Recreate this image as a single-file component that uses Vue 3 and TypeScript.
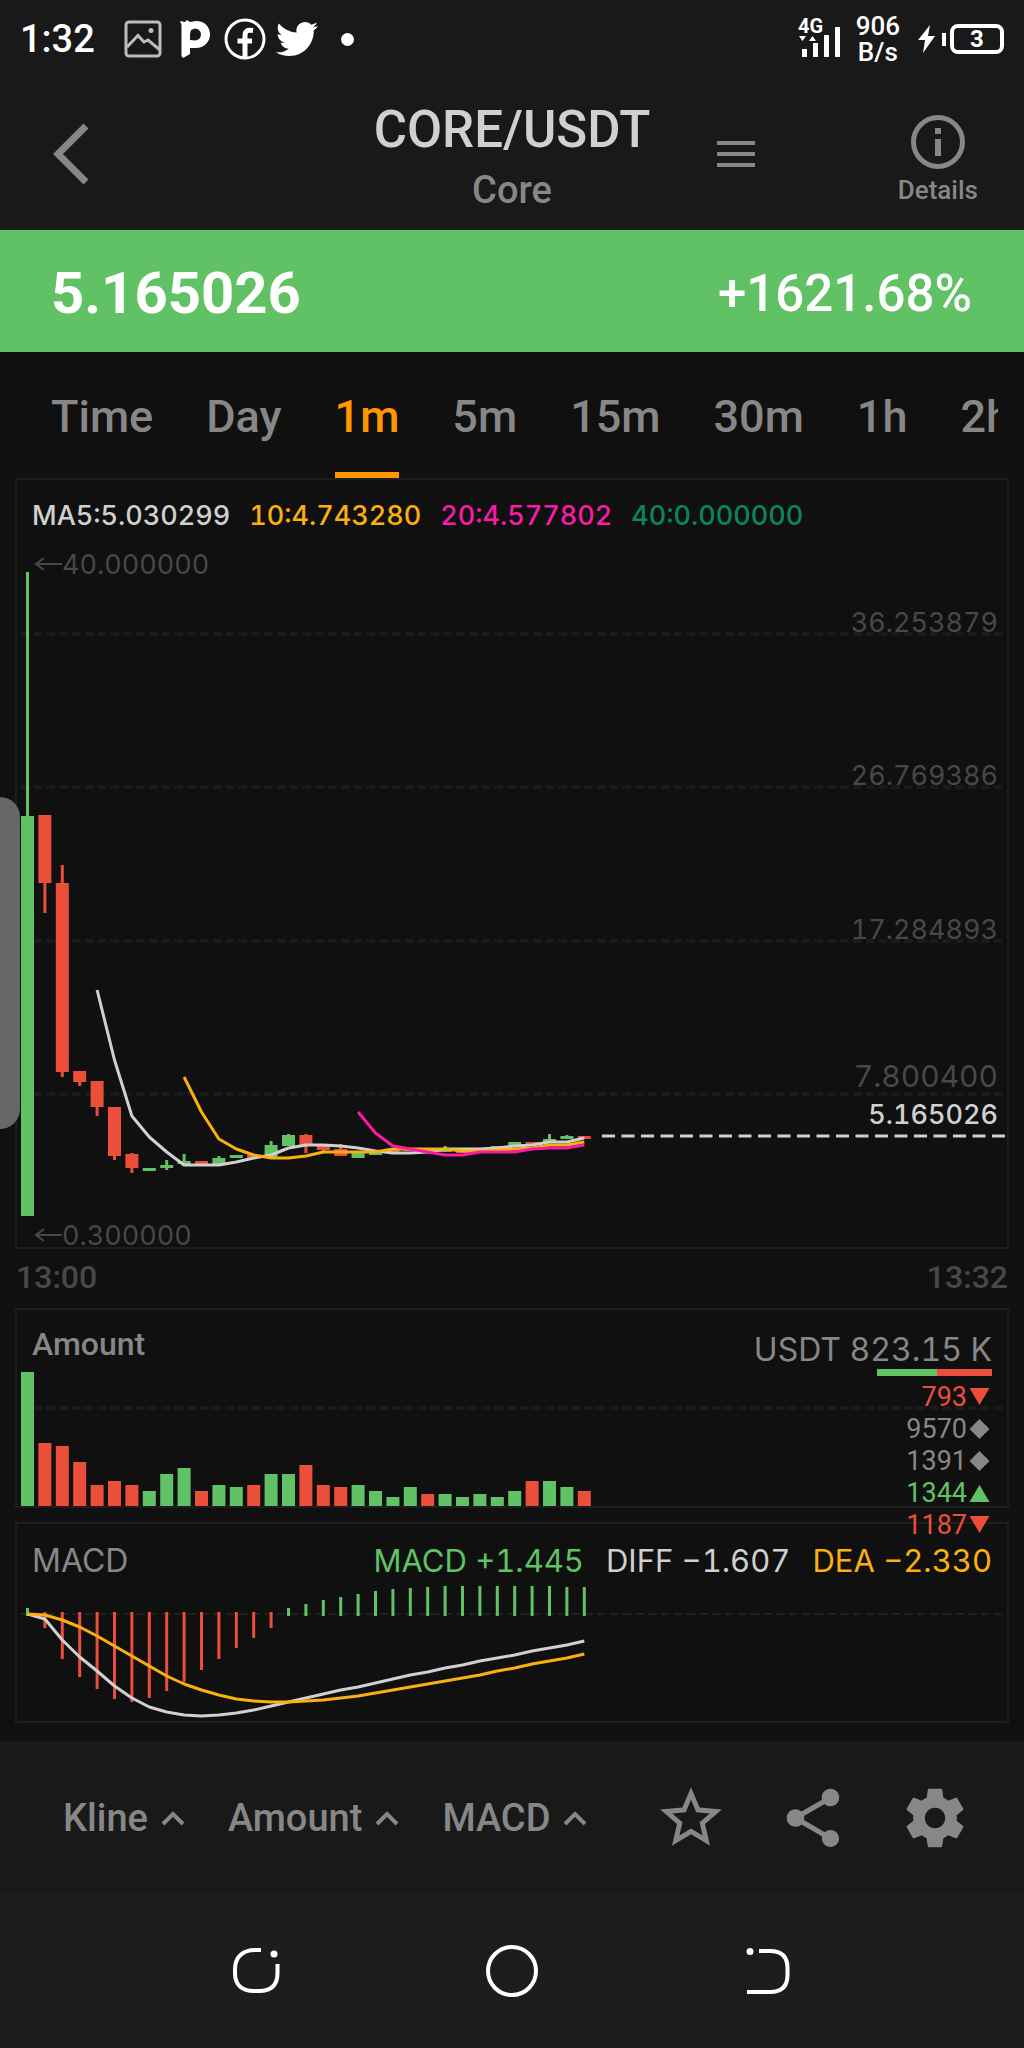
<script setup lang="ts">
import { ref } from 'vue'

type Side = 'up' | 'down'

interface Candle {
  side: Side
  top: number
  bottom: number
  high: number
  low: number
}

const STEP = 17.4
const FIRST = 10.5
const BODY = 13

const cx = (i: number): number => FIRST + i * STEP

const tabs = ['Time', 'Day', '1m', '5m', '15m', '30m', '1h', '2h']
const activeTab = ref('1m')

const averages = [
  { label: 'MA5:5.030299', tone: 'light' },
  { label: '10:4.743280', tone: 'yellow' },
  { label: '20:4.577802', tone: 'pink' },
  { label: '40:0.000000', tone: 'teal' },
]

const candle = (side: Side, top: number, bottom: number, high = top, low = bottom): Candle => ({
  side,
  top,
  bottom,
  high,
  low,
})

const candles: Candle[] = [
  candle('up', 336, 736, 92),
  candle('down', 335, 403, 335, 433),
  candle('down', 403, 592, 385, 597),
  candle('down', 591, 602, 591, 606),
  candle('down', 601, 627, 601, 636),
  candle('down', 627, 676, 627, 680),
  candle('down', 674, 688, 673, 693),
  candle('up', 688, 691),
  candle('up', 685, 688, 680, 690),
  candle('up', 681, 684, 674, 685),
  candle('down', 681, 684),
  candle('up', 678, 684, 676, 686),
  candle('up', 675, 678),
  candle('down', 675, 678),
  candle('up', 665, 677, 661),
  candle('up', 655, 666, 654),
  candle('down', 655, 665, 654, 673),
  candle('down', 666, 670, 664, 673),
  candle('down', 669, 676, 664),
  candle('up', 673, 678),
  candle('up', 672, 675),
  candle('down', 669, 672),
  candle('down', 668, 671),
  candle('down', 669, 672),
  candle('up', 670, 672, 666),
  candle('down', 669, 673),
  candle('down', 669, 673),
  candle('up', 666, 669),
  candle('up', 662, 665),
  candle('down', 662, 665),
  candle('up', 659, 662, 654),
  candle('up', 656, 659, 655),
  candle('down', 656, 659),
]

const ma5 = [
  510, 580, 636, 657, 672, 685, 685, 685, 682, 678, 675, 668, 665, 665, 666, 668, 671, 673, 673,
  672, 669, 669, 669, 668, 666, 665, 662, 662, 658,
]
const ma10 = [
  597, 632, 659, 669, 675, 678, 678, 676, 672, 672, 672, 672, 669, 669, 669, 669, 671, 671, 670,
  669, 668, 665, 665, 662,
]
const ma20 = [632, 653, 666, 669, 672, 675, 675, 672, 672, 672, 669, 668, 668, 665]

const grid = [
  { y: 154, label: '36.253879', baseline: 152, large: false },
  { y: 307, label: '26.769386', baseline: 305, large: false },
  { y: 461, label: '17.284893', baseline: 459, large: false },
  { y: 614, label: '7.800400', baseline: 607, large: true },
]

const extremes = [
  { label: '40.000000', baseline: 94 },
  { label: '0.300000', baseline: 765 },
]

const volumes = [
  134, 63, 60, 44, 21, 25, 21, 15, 32, 38, 15, 21, 19, 21, 32, 32, 41, 21, 19, 21, 15, 9, 19, 12,
  12, 9, 12, 9, 15, 25, 25, 19, 15,
]
const volumeDown = new Set([1, 2, 3, 4, 5, 6, 10, 13, 16, 17, 18, 23, 29, 32])

const ZERO = 90
const histogram = [
  6, -14, -45, -63, -75, -85, -88, -84, -77, -68, -56, -45, -34, -24, -14, 6, 10, 14, 17, 20, 23,
  25, 26, 27, 28, 28, 28, 28, 28, 28, 28, 27, 27,
]
const diff = [
  0, 5, 26, 43, 57, 72, 84, 93, 98, 101, 102, 101, 99, 96, 92, 88, 84, 80, 76, 73, 69, 65, 61, 58,
  54, 51, 47, 44, 41, 37, 34, 31, 27,
]
const dea = [
  0, 1, 6, 13, 22, 32, 42, 52, 62, 70, 76, 81, 85, 87, 88, 88, 87, 86, 84, 82, 79, 76, 73, 70, 67,
  64, 61, 57, 54, 50, 47, 44, 40,
]

const line = (ys: number[], start = 0, base = 0): string =>
  ys.map((y, i) => `${cx(start + i).toFixed(1)},${base + y}`).join(' ')

const trades = [
  { amount: '793', kind: 'down' },
  { amount: '9570', kind: 'flat' },
  { amount: '1391', kind: 'flat' },
  { amount: '1344', kind: 'up' },
  { amount: '1187', kind: 'down' },
]

const shapes: Record<string, string> = {
  down: '0,1 20,1 10,18',
  flat: '10,0 20,10 10,20 0,10',
  up: '10,2 20,19 0,19',
}

const pickers = ['Kline', 'Amount', 'MACD']
</script>

<template>
  <div class="screen">
    <div class="status">
      <div class="status-left">
        <span class="clock">1:32</span>
        <svg width="38" height="38" viewBox="0 0 38 38" fill="none" stroke="#bdbdbd" stroke-width="3">
          <rect x="2" y="2" width="34" height="34" rx="3" />
          <path d="M3 27 L14 15.500 L20 22 L24 20 L36 30" />
          <circle cx="27" cy="10.500" r="2.500" fill="#bdbdbd" stroke="none" />
        </svg>
        <svg class="ico-p" width="30" height="38" viewBox="0 0 30 38">
          <path fill="#fff" fill-rule="evenodd" d="M0 1 L5 2 L7 0 L10 2 L16 1 C25 1 30 7 30 14.500 C30 22 24 28 16 28 L10 28 L10 34 L3 38 L1.500 36 L1.500 5 Z M15 8.500 L11 10 L10 14 L10 20 L15 20.500 A6 6 0 0 0 21 14.500 A6 6 0 0 0 15 8.500 Z" />
        </svg>
        <svg class="ico-f" width="42" height="42" viewBox="0 0 42 42" fill="none" stroke="#fff">
          <circle cx="21" cy="21" r="19" stroke-width="3" />
          <path d="M21 40 V18 C21 13 23 11.500 29 12.500 M13.500 23 H28" stroke-width="5" />
        </svg>
        <svg class="ico-bird" width="42" height="42" viewBox="0 0 24 24" fill="#fff">
          <path d="M23.954 4.569c-.885.389-1.83.654-2.825.775 1.014-.611 1.794-1.574 2.163-2.723-.951.555-2.005.959-3.127 1.184-.896-.959-2.173-1.559-3.591-1.559-2.717 0-4.92 2.203-4.92 4.917 0 .39.045.765.127 1.124C7.691 8.094 4.066 6.13 1.64 3.161c-.427.722-.666 1.561-.666 2.475 0 1.71.87 3.213 2.188 4.096-.807-.026-1.566-.248-2.228-.616v.061c0 2.385 1.693 4.374 3.946 4.827-.413.111-.849.171-1.296.171-.314 0-.615-.03-.916-.086.631 1.953 2.445 3.377 4.604 3.417-1.68 1.319-3.809 2.105-6.102 2.105-.39 0-.779-.023-1.17-.067 2.189 1.394 4.768 2.209 7.557 2.209 9.054 0 13.999-7.496 13.999-13.986 0-.209 0-.42-.015-.63.961-.689 1.8-1.56 2.46-2.548l-.047-.02z" />
        </svg>
        <span class="dot"></span>
      </div>
      <div class="status-right">
        <svg width="44" height="46" viewBox="0 -3 44 46" fill="#fff">
          <text x="0" y="14" class="net">4G</text>
          <path d="M1 17 H8 L4.500 22 Z M11 22 H18 L14.500 17 Z" />
          <path d="M4 30 h5 v8 h-5 z M15 24 h5 v14 h-5 z M26 16 h5 v22 h-5 z M37 8 h5 v30 h-5 z" />
        </svg>
        <div class="rate"><span>906</span><span>B/s</span></div>
        <svg width="18" height="28" viewBox="0 0 18 28" fill="#fff"><path d="M12 0 L0 15 H7 L5 28 L17 11 H10 Z" /></svg>
        <span class="battery-tip"></span>
        <span class="battery">3</span>
      </div>
    </div>

    <header class="header">
      <button class="plain back" type="button" aria-label="Back">
        <svg width="38" height="62" viewBox="0 0 38 62" fill="none" stroke="#878787" stroke-width="7"><path d="M34 3 L6 31 L34 59" /></svg>
      </button>
      <div class="title">
        <h1>CORE/USDT</h1>
        <p>Core</p>
      </div>
      <div class="header-actions">
        <button class="plain" type="button" aria-label="Menu">
          <svg width="38" height="26" viewBox="0 0 38 26" fill="#878787"><path d="M0 0h38v4H0z M0 11h38v4H0z M0 22h38v4H0z" /></svg>
        </button>
        <button class="plain details" type="button">
          <svg width="54" height="54" viewBox="0 0 54 54" fill="none" stroke="#878787">
            <circle cx="27" cy="27" r="24.500" stroke-width="5" />
            <path d="M27 13 v6 M27 24 v17" stroke-width="6" />
          </svg>
          <span>Details</span>
        </button>
      </div>
    </header>

    <div class="quote">
      <strong>5.165026</strong>
      <span>+1621.68%</span>
    </div>

    <nav class="tabs">
      <button
        v-for="tab in tabs"
        :key="tab"
        type="button"
        class="plain tab"
        :class="{ active: tab === activeTab }"
        @click="activeTab = tab"
      >{{ tab }}</button>
    </nav>

    <main class="charts">
      <section class="panel">
        <div class="legend">
          <span v-for="item in averages" :key="item.label" :class="item.tone">{{ item.label }}</span>
        </div>
        <svg class="plot" viewBox="0 0 990 767">
          <line v-for="g in grid" :key="g.y" class="grid-line" x1="4" x2="986" :y1="g.y" :y2="g.y" />
          <g v-for="(c, i) in candles" :key="i" :class="c.side">
            <rect :x="cx(i) - 1.5" :y="c.high" width="3" :height="c.low - c.high" />
            <rect :x="cx(i) - BODY / 2" :y="c.top" :width="BODY" :height="c.bottom - c.top" />
          </g>
          <polyline class="trace light" :points="line(ma5, 4)" />
          <polyline class="trace yellow" :points="line(ma10, 9)" />
          <polyline class="trace pink" :points="line(ma20, 19)" />
          <line class="last-line" x1="585" x2="990" y1="656" y2="656" />
          <g v-for="e in extremes" :key="e.label">
            <path class="arrow" :d="`M45 ${e.baseline - 10} H19 m8 -6 l-8 6 l8 6`" />
            <text class="mark" x="45" :y="e.baseline">{{ e.label }}</text>
          </g>
          <text
            v-for="g in grid"
            :key="g.label"
            class="mark end"
            :class="{ large: g.large }"
            x="981"
            :y="g.baseline"
          >{{ g.label }}</text>
          <text class="mark end last" x="981" y="644">5.165026</text>
        </svg>
      </section>

      <div class="axis"><span>13:00</span><span>13:32</span></div>

      <section class="panel">
        <div class="panel-head">
          <span class="name">Amount</span>
          <div class="book">
            <span class="total">USDT 823.15 K</span>
            <div class="ratio"><i class="buy"></i><i class="sell"></i></div>
            <ul>
              <li v-for="t in trades" :key="t.amount" :class="t.kind">
                {{ t.amount }}<svg width="21" height="20" viewBox="0 0 20 20"><polygon :points="shapes[t.kind]" /></svg>
              </li>
            </ul>
          </div>
        </div>
        <svg class="plot" viewBox="0 0 990 196">
          <line class="grid-line" x1="4" x2="986" y1="98" y2="98" />
          <rect
            v-for="(v, i) in volumes"
            :key="i"
            :class="volumeDown.has(i) ? 'down' : 'up'"
            :x="cx(i) - BODY / 2"
            :y="196 - v"
            :width="BODY"
            :height="v"
          />
        </svg>
      </section>

      <section class="panel macd">
        <div class="panel-head">
          <span class="name">MACD</span>
          <div class="readout">
            <span class="up">MACD +1.445</span>
            <span class="light">DIFF −1.607</span>
            <span class="yellow">DEA −2.330</span>
          </div>
        </div>
        <svg class="plot" viewBox="0 0 990 197">
          <line class="grid-line thin" x1="4" x2="986" :y1="ZERO" :y2="ZERO" />
          <rect
            v-for="(v, i) in histogram"
            :key="i"
            :class="v > 0 ? 'up' : 'down'"
            :x="cx(i) - 1.5"
            :y="v > 0 ? ZERO - v : ZERO - 2"
            width="3"
            :height="Math.abs(v) + 2"
          />
          <polyline class="trace light" :points="line(diff, 0, ZERO)" />
          <polyline class="trace yellow" :points="line(dea, 0, ZERO)" />
        </svg>
      </section>
      <span class="edge-handle"></span>
    </main>

    <footer class="toolbar">
      <div class="pickers">
        <button v-for="p in pickers" :key="p" type="button" class="plain picker">
          {{ p }}
          <svg width="24" height="16" viewBox="0 0 24 16" fill="none" stroke="#878787" stroke-width="4"><path d="M2 14 L12 4 L22 14" /></svg>
        </button>
      </div>
      <div class="actions">
        <button class="plain" type="button" aria-label="Favorite">
          <svg width="74" height="74" viewBox="0 0 24 24" fill="#878787"><path d="M22 9.240l-7.190-.620L12 2 9.190 8.630 2 9.240l5.460 4.730L5.820 21 12 17.270 18.180 21l-1.630-7.030L22 9.240zM12 15.400l-3.760 2.270 1-4.280-3.320-2.880 4.380-.380L12 6.100l1.710 4.040 4.380.380-3.320 2.880 1 4.280L12 15.400z" /></svg>
        </button>
        <button class="plain" type="button" aria-label="Share">
          <svg width="70" height="70" viewBox="0 0 24 24" fill="#878787"><path d="M18 16.080c-.76 0-1.440.3-1.960.77L8.910 12.700c.05-.23.09-.46.09-.7s-.04-.47-.09-.7l7.050-4.110c.54.5 1.250.81 2.040.81 1.660 0 3-1.340 3-3s-1.340-3-3-3-3 1.340-3 3c0 .24.04.47.09.7L8.040 9.810C7.500 9.310 6.790 9 6 9c-1.660 0-3 1.340-3 3s1.340 3 3 3c.79 0 1.500-.31 2.040-.81l7.120 4.160c-.05.21-.08.43-.08.65 0 1.610 1.310 2.920 2.920 2.920s2.920-1.310 2.920-2.920-1.310-2.920-2.920-2.920z" /></svg>
        </button>
        <button class="plain" type="button" aria-label="Settings">
          <svg width="70" height="70" viewBox="0 0 24 24" fill="#878787"><path d="M19.430 12.980c.04-.32.07-.64.07-.98s-.03-.66-.07-.98l2.110-1.650c.19-.15.24-.42.12-.64l-2-3.460c-.12-.22-.39-.3-.61-.22l-2.490 1c-.52-.4-1.080-.73-1.690-.98l-.38-2.650C14.460 2.180 14.250 2 14 2h-4c-.25 0-.46.18-.49.42l-.38 2.650c-.61.25-1.170.59-1.690.98l-2.490-1c-.23-.09-.49 0-.61.22l-2 3.460c-.13.22-.07.49.12.64l2.110 1.650c-.04.32-.07.65-.07.98s.03.66.07.98l-2.110 1.650c-.19.15-.24.42-.12.64l2 3.460c.12.22.39.3.61.22l2.490-1c.52.4 1.080.73 1.690.98l.38 2.650c.03.24.24.42.49.42h4c.25 0 .46-.18.49-.42l.38-2.650c.61-.25 1.170-.59 1.690-.98l2.490 1c.23.09.49 0 .61-.22l2-3.460c.12-.22.07-.49-.12-.64l-2.110-1.650zM12 15.500c-1.930 0-3.500-1.570-3.500-3.500s1.570-3.500 3.500-3.500 3.500 1.570 3.500 3.500-1.570 3.500-3.500 3.500z" /></svg>
        </button>
      </div>
    </footer>

    <nav class="system">
      <button class="plain" type="button" aria-label="Recent apps">
        <svg width="52" height="52" viewBox="0 0 52 52" fill="none" stroke="#fff" stroke-width="4">
          <path d="M31 5 H25 C13 5 5 12 5 24 V28 C5 40 12 46 24 46 H29 C41 46 47.500 40 47.500 28 V19" />
          <circle cx="44" cy="9" r="3.500" fill="#fff" stroke="none" />
        </svg>
      </button>
      <button class="plain" type="button" aria-label="Home">
        <svg width="52" height="52" viewBox="0 0 52 52" fill="none" stroke="#fff" stroke-width="4"><circle cx="26" cy="26" r="24" /></svg>
      </button>
      <button class="plain" type="button" aria-label="Back">
        <svg width="52" height="52" viewBox="0 0 52 52" fill="none" stroke="#fff" stroke-width="4">
          <path d="M17 6 H28 C40 6 45.500 12 45.500 23 V30 C45.500 41 40 47 28 47 H5" />
          <circle cx="8" cy="6.500" r="3.500" fill="#fff" stroke="none" />
        </svg>
      </button>
    </nav>
  </div>
</template>

<style>
body {
  margin: 0;
  background: #101010;
}
</style>

<style scoped>
.screen {
  display: flex;
  flex-direction: column;
  min-height: 100vh;
  background: #101010;
  color: #878787;
  font-family: Roboto, sans-serif;
  font-weight: 500;
}

svg {
  display: block;
  flex: none;
}

.plain {
  margin: 0;
  padding: 0;
  border: 0;
  background: none;
  color: inherit;
  font: inherit;
  cursor: pointer;
}

.status {
  display: flex;
  justify-content: space-between;
  align-items: center;
  height: 78px;
  padding: 0 20px;
  background: #191919;
  color: #fff;
}

.status-left,
.status-right {
  display: flex;
  align-items: center;
}

.clock {
  width: 104px;
  font-size: 38px;
}

.ico-p {
  margin-left: 18px;
}

.ico-f {
  margin-left: 14px;
}

.ico-bird {
  margin-left: 10px;
}

.dot {
  width: 13px;
  height: 13px;
  margin-left: 23px;
  border-radius: 50%;
  background: #fff;
}

.net {
  font-size: 20px;
  font-weight: 700;
}

.rate {
  display: flex;
  flex-direction: column;
  margin: 0 18px 0 14px;
  font-size: 26px;
  line-height: 26px;
  text-align: center;
}

.battery-tip {
  width: 4px;
  height: 13px;
  margin: 0 4px 0 6px;
  background: #fff;
}

.battery {
  box-sizing: border-box;
  width: 54px;
  height: 30px;
  border: 4px solid #fff;
  border-radius: 8px;
  font-size: 24px;
  font-weight: 700;
  line-height: 22px;
  text-align: center;
}

.header {
  display: grid;
  grid-template-columns: 1fr auto 1fr;
  align-items: center;
  height: 152px;
  padding: 0 46px;
  background: #191919;
}

.back {
  justify-self: start;
  padding-left: 6px;
}

.title,
.details {
  padding-top: 12px;
}

.title {
  text-align: center;
}

h1,
.title p {
  margin: 0;
  font-weight: 500;
}

h1 {
  color: #d0d0d0;
  font-size: 51px;
  line-height: 60px;
}

.title p {
  font-size: 38px;
  line-height: 60px;
}

.header-actions {
  display: flex;
  justify-content: space-between;
  align-items: center;
  padding-left: 67px;
}

.details {
  display: flex;
  flex-direction: column;
  align-items: center;
  gap: 5px;
  font-size: 26px;
  line-height: 32px;
}

.quote {
  display: flex;
  justify-content: space-between;
  align-items: center;
  box-sizing: border-box;
  height: 122px;
  padding: 4px 52px 0 51px;
  background: #60c265;
  color: #fff;
  font-size: 51px;
}

.quote strong {
  font-size: 58px;
  font-weight: 700;
}

.tabs {
  display: flex;
  gap: 53px;
  margin-right: 26px;
  padding-left: 51px;
  overflow: hidden;
}

.tab {
  flex: none;
  height: 128px;
  box-sizing: border-box;
  border-top: 8px solid transparent;
  border-bottom: 8px solid transparent;
  font-size: 45px;
}

.tab.active {
  border-bottom-color: #ff9800;
  color: #ff9800;
}

.charts {
  position: relative;
  margin-top: -2px;
  padding: 0 15px 18px;
  overflow: hidden;
}

.panel {
  position: relative;
  border: 2px solid #1e1e1e;
}

.macd {
  margin-top: 14px;
}

.plot {
  width: 100%;
  height: auto;
  overflow: visible;
}

.legend,
.panel-head {
  position: absolute;
  top: 0;
  left: 0;
  right: 0;
  display: flex;
  white-space: nowrap;
}

.legend {
  gap: 19px;
  padding: 20px 15px;
  font-family: Inter, sans-serif;
  font-size: 27px;
  font-variant-numeric: tabular-nums;
  line-height: 32px;
}

.panel-head {
  justify-content: space-between;
  padding: 14px 15px;
  font-size: 32px;
  line-height: 40px;
  z-index: 1;
}

.macd .panel-head {
  padding-top: 17px;
}

.readout {
  display: flex;
  gap: 22px;
  font-size: 31px;
}

.readout,
.total,
.macd .name {
  font-family: Inter, sans-serif;
  font-variant-numeric: tabular-nums;
  font-weight: 400;
}

.total {
  padding-top: 6px;
}

.book {
  display: flex;
  flex-direction: column;
  align-items: flex-end;
}

.ratio {
  display: flex;
  width: 115px;
  height: 7px;
  margin: -1px 0 5px;
}

.buy {
  flex: 60;
  background: #60c265;
}

.sell {
  flex: 55;
  background: #ec4e3c;
}

ul {
  margin: 0;
  padding: 0 2px 0 0;
  list-style: none;
  font-size: 27px;
  font-weight: 400;
  line-height: 32px;
}

li {
  display: flex;
  justify-content: flex-end;
  align-items: center;
  gap: 2px;
}

.light {
  color: #d0d0d0;
}

.yellow {
  color: #fbb011;
}

.pink {
  color: #f71ba6;
}

.teal {
  color: #0b8560;
}

.up {
  color: #60c265;
  fill: currentColor;
}

.down {
  color: #ec4e3c;
  fill: currentColor;
}

.flat {
  fill: currentColor;
}

.trace {
  fill: none;
  stroke: currentColor;
  stroke-width: 3;
  stroke-linejoin: round;
}

.grid-line {
  stroke: #1b1b1b;
  stroke-width: 4;
  stroke-dasharray: 8.600 4.200;
}

.grid-line.thin {
  stroke: #202020;
  stroke-width: 2;
}

.last-line {
  stroke: #d0d0d0;
  stroke-width: 3;
  stroke-dasharray: 13 6.500;
}

.arrow {
  fill: none;
  stroke: #484848;
  stroke-width: 2;
}

.mark {
  fill: #484848;
  font-family: Inter, sans-serif;
  font-size: 27px;
  font-variant-numeric: tabular-nums;
  font-weight: 400;
}

.mark.end {
  text-anchor: end;
}

.mark.large {
  font-size: 30px;
}

.mark.last {
  fill: #d0d0d0;
  font-weight: 500;
}

.axis {
  display: flex;
  justify-content: space-between;
  padding: 0 1px 2px;
  color: #484848;
  font-size: 32px;
  line-height: 57px;
}

.edge-handle {
  position: absolute;
  top: 319px;
  left: -20px;
  width: 40px;
  height: 332px;
  border-radius: 40px;
  background: #676767;
}

.toolbar {
  display: flex;
  justify-content: space-between;
  align-items: center;
  height: 153px;
  padding: 0 52px 0 63px;
  background: #191919;
  font-size: 38px;
}

.pickers {
  display: flex;
  gap: 43px;
}

.picker {
  display: flex;
  align-items: center;
  gap: 13px;
}

.actions {
  display: flex;
  align-items: center;
  gap: 48px;
}

.actions .plain {
  display: flex;
  justify-content: center;
  width: 74px;
}

.system {
  flex: 1;
  display: grid;
  grid-template-columns: repeat(3, 1fr);
  place-items: center;
  min-height: 154px;
  padding: 0 12.5%;
  box-sizing: border-box;
  background: #1d1d1d;
}
</style>
